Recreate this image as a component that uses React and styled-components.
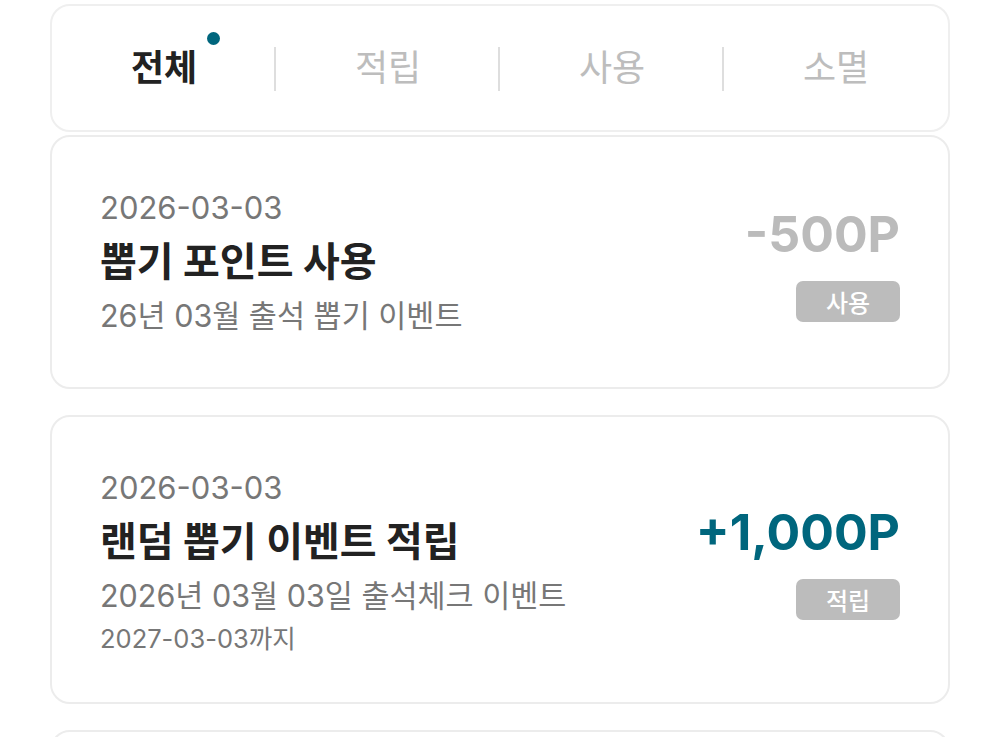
import React from "react";
import styled, { createGlobalStyle } from "styled-components";

const Global = createGlobalStyle`
  html, body { margin: 0; padding: 0; background: #ffffff; }
  body { font-family: Inter, "Noto Sans CJK KR", sans-serif; overflow: hidden; }
  * { box-sizing: border-box; }
`;

const Page = styled.div`
  padding: 4px 50px 0;
  display: flex;
  flex-direction: column;
`;

const TabCard = styled.nav`
  height: 128px;
  border: 2px solid #efefef;
  border-radius: 20px;
  display: flex;
  align-items: stretch;
  background: #fff;
`;

const Tab = styled.div`
  flex: 1;
  display: flex;
  align-items: center;
  justify-content: center;
  position: relative;
  &:not(:first-child)::before {
    content: "";
    position: absolute;
    left: -2px;
    top: 50%;
    width: 2px;
    height: 44px;
    margin-top: -21px;
    background: #dedede;
  }
`;

const TabLabel = styled.span`
  position: relative;
  font-size: 36px;
  line-height: 36px;
  font-weight: ${(p) => (p.$active ? 700 : 400)};
  color: ${(p) => (p.$active ? "#222222" : "#bdbdbd")};
`;

const Dot = styled.span`
  position: absolute;
  top: -18px;
  left: calc(100% + 10px);
  width: 13px;
  height: 13px;
  border-radius: 50%;
  background: #00667d;
`;

const List = styled.div`
  display: flex;
  flex-direction: column;
  gap: 26px;
  margin-top: 3px;
`;

const Card = styled.article`
  border: 2px solid #ececec;
  border-radius: 20px;
  padding: 51px 48px 51px 48px;
  display: flex;
  align-items: center;
  justify-content: space-between;
  background: #fff;
`;

const Info = styled.div`
  display: flex;
  flex-direction: column;
`;

const DateText = styled.div`
  font-size: 31px;
  line-height: 40px;
  color: #777777;
`;

const Title = styled.div`
  margin-top: 9px;
  font-size: 40px;
  line-height: 50px;
  font-weight: 700;
  color: #222222;
`;

const Desc = styled.div`
  margin-top: 9px;
  font-size: 30.5px;
  line-height: 40px;
  color: #777777;
`;

const Expire = styled.div`
  margin-top: 11px;
  font-size: 25.5px;
  line-height: 24px;
  color: #777777;
`;

const Side = styled.div`
  display: flex;
  flex-direction: column;
  align-items: flex-end;
  margin-top: 4px;
`;

const Amount = styled.div`
  font-size: 50px;
  line-height: 56px;
  font-weight: 700;
  color: ${(p) => (p.$plus ? "#00667d" : "#bbbbbb")};
`;

const Badge = styled.span`
  margin-top: 19px;
  width: 104px;
  height: 41px;
  border-radius: 7px;
  background: #bcbcbc;
  color: #ffffff;
  font-size: 24px;
  font-weight: 500;
  display: flex;
  align-items: center;
  justify-content: center;
`;

const tabs = ["전체", "적립", "사용", "소멸"];

const items = [
  {
    date: "2026-03-03",
    title: "뽑기 포인트 사용",
    desc: "26년 03월 출석 뽑기 이벤트",
    amount: "-500P",
    plus: false,
    type: "사용",
  },
  {
    date: "2026-03-03",
    title: "랜덤 뽑기 이벤트 적립",
    desc: "2026년 03월 03일 출석체크 이벤트",
    expire: "2027-03-03까지",
    amount: "+1,000P",
    plus: true,
    type: "적립",
  },
  {
    date: "2026-03-02",
    title: "랜덤 뽑기 이벤트 적립",
    desc: "2026년 03월 02일 출석체크 이벤트",
    expire: "2027-03-02까지",
    amount: "+500P",
    plus: true,
    type: "적립",
  },
];

export default function App() {
  return (
    <>
      <Global />
      <Page>
        <TabCard>
          {tabs.map((t, i) => (
            <Tab key={t}>
              <TabLabel $active={i === 0}>
                {t}
                {i === 0 && <Dot />}
              </TabLabel>
            </Tab>
          ))}
        </TabCard>
        <List>
          {items.map((it, i) => (
            <Card key={i}>
              <Info>
                <DateText>{it.date}</DateText>
                <Title>{it.title}</Title>
                <Desc>{it.desc}</Desc>
                {it.expire && <Expire>{it.expire}</Expire>}
              </Info>
              <Side>
                <Amount $plus={it.plus}>{it.amount}</Amount>
                <Badge>{it.type}</Badge>
              </Side>
            </Card>
          ))}
        </List>
      </Page>
    </>
  );
}
